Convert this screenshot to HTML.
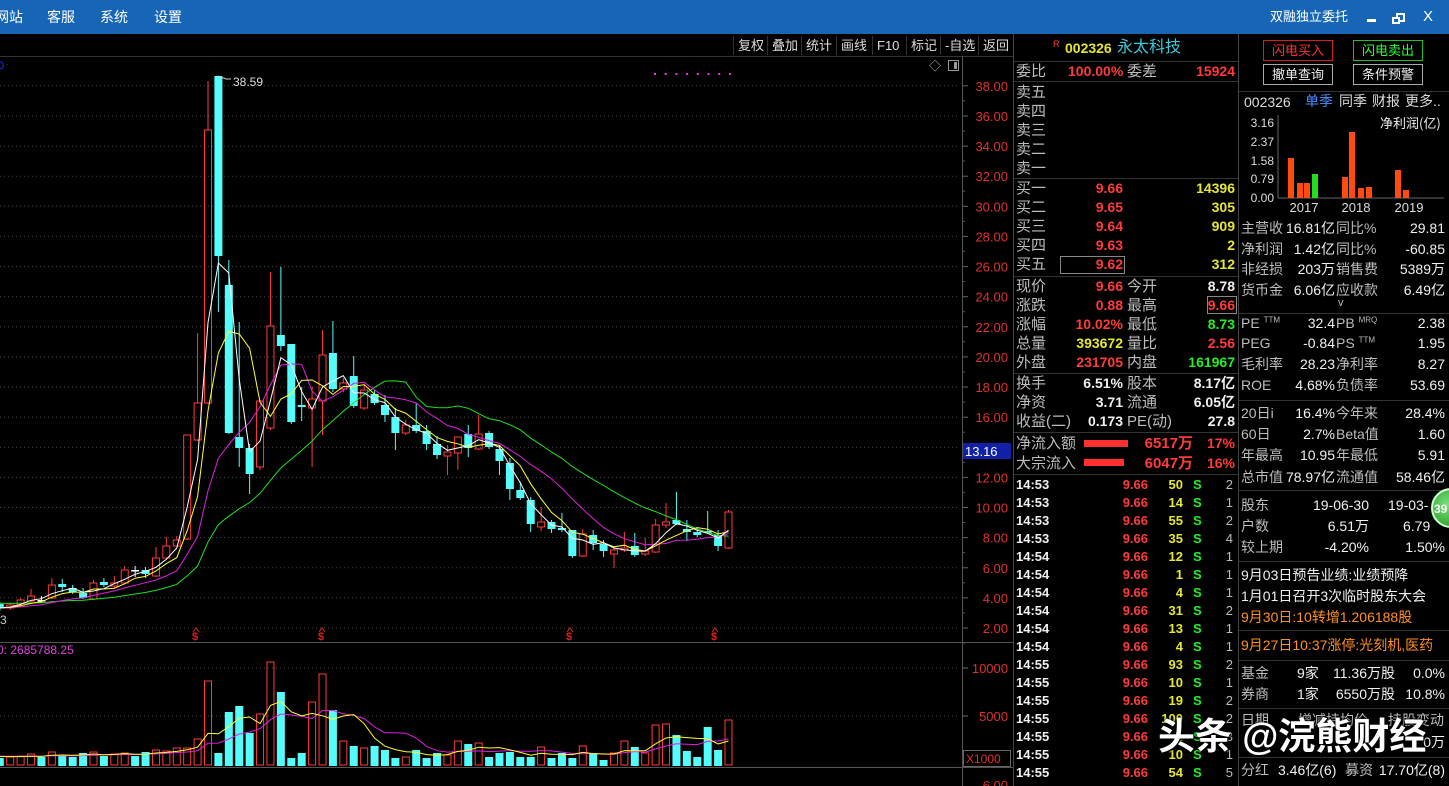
<!DOCTYPE html>
<html><head><meta charset="utf-8">
<style>
*{margin:0;padding:0;box-sizing:border-box}
body{width:1449px;height:786px;background:#000;overflow:hidden;position:relative;font-family:"Liberation Sans","Noto Sans CJK SC",sans-serif;color:#c8c8c8}
.a{position:absolute;white-space:nowrap;line-height:1}
#top{position:absolute;left:0;top:0;width:1449px;height:34px;background:#1766b6}
#top .a{color:#fff;font-size:14px;top:10px}
.tb{position:absolute;top:36px;height:19px;font-size:13px;color:#ddd;line-height:19px;padding:0 4px;border-left:1px solid #333}
.hl{position:absolute;height:1px;background:#333}
.vl{position:absolute;width:1px;background:#3a3a3a}
.lab{color:#bdbdbd}
.r{color:#ff3b3b}.y{color:#e6e633}.g{color:#22ee22}.w{color:#f0f0f0}.o{color:#ff9020}
#mid .r,#mid .y,#mid .g,#mid .w{font-weight:bold}
.btn{position:absolute;width:70px;height:21px;font-size:13px;text-align:center;line-height:19px}
</style></head><body>
<div id="top">
<div class="a" style="left:-5px">网站</div>
<div class="a" style="left:47px">客服</div>
<div class="a" style="left:100px">系统</div>
<div class="a" style="left:154px">设置</div>
<div class="a" style="left:1270px;font-size:13px">双融独立委托</div>
<div style="position:absolute;left:1367px;top:19px;width:9px;height:3px;background:#fff"></div>
<div style="position:absolute;left:1396px;top:13px;width:9px;height:9px;border:2px solid #fff"></div>
<div style="position:absolute;left:1392px;top:17px;width:8px;height:7px;border:2px solid #fff;background:#1766b6"></div>
<div class="a" style="left:1423px;top:9px;font-size:15px">X</div>
</div>
<div class="tb" style="left:733px">复权</div>
<div class="tb" style="left:767px">叠加</div>
<div class="tb" style="left:801px">统计</div>
<div class="tb" style="left:836px">画线</div>
<div class="tb" style="left:872px">F10</div>
<div class="tb" style="left:906px">标记</div>
<div class="tb" style="left:940px">-自选</div>
<div class="tb" style="left:978px;border-right:1px solid #333">返回</div>
<div class="hl" style="left:0;top:56px;width:1013px"></div>

<svg id="ch" width="1013" height="786" style="position:absolute;left:0;top:0"></svg>

<div class="vl" style="left:1013px;top:34px;height:752px;background:#444"></div>
<div class="vl" style="left:1238px;top:34px;height:752px;background:#444"></div>

<div class="a r" style="left:1053px;top:40px;font-size:9px">R</div>
<div class="a y" style="left:1065px;top:41px;font-size:14px;font-weight:bold">002326</div>
<div class="a" style="left:1117px;top:40px;font-size:16px;color:#3cc8d8">永太科技</div>
<div class="hl" style="left:1014px;top:61px;width:224px"></div>
<div id="mid"></div>

<div class="btn" style="left:1263px;top:40px;border:1px solid #d02020;color:#ff3030">闪电买入</div>
<div class="btn" style="left:1353px;top:40px;border:1px solid #20c020;color:#30ff30">闪电卖出</div>
<div class="btn" style="left:1263px;top:64px;border:1px solid #aaa;color:#eee">撤单查询</div>
<div class="btn" style="left:1353px;top:64px;border:1px solid #aaa;color:#eee">条件预警</div>
<div class="hl" style="left:1239px;top:91px;width:210px"></div>
<div class="a" style="left:1244px;top:95px;font-size:14px;color:#ddd">002326</div>
<div class="a" style="left:1305px;top:94px;font-size:14px;color:#4a8cff">单季</div>
<div class="a" style="left:1339px;top:94px;font-size:14px;color:#ddd">同季</div>
<div class="a" style="left:1372px;top:94px;font-size:14px;color:#ddd">财报</div>
<div class="a" style="left:1405px;top:94px;font-size:14px;color:#ddd">更多..</div>
<svg width="210" height="110" style="position:absolute;left:1239px;top:110px">
<g font-size="12" fill="#ddd" text-anchor="end" font-family="Liberation Sans">
<text x="35" y="17">3.16</text><text x="35" y="36">2.37</text><text x="35" y="55">1.58</text><text x="35" y="73">0.79</text><text x="35" y="92">0.00</text>
<text x="65" y="102" text-anchor="middle" font-size="13">2017</text><text x="117" y="102" text-anchor="middle" font-size="13">2018</text><text x="170" y="102" text-anchor="middle" font-size="13">2019</text>
</g>
<text x="141" y="18" font-size="13" fill="#eee" font-family="Noto Sans CJK SC">净利润(亿)</text>
<line x1="39" y1="5" x2="39" y2="88" stroke="#666"/>
<line x1="39" y1="88" x2="205" y2="88" stroke="#666"/>
<g fill="#ff4a10">
<rect x="49" y="48" width="6" height="40"/><rect x="58" y="73" width="6" height="15"/><rect x="65" y="73" width="6" height="15"/>
<rect x="103" y="67" width="6" height="21"/><rect x="110" y="22" width="6" height="66"/><rect x="119" y="78" width="6" height="10"/><rect x="127" y="77" width="6" height="11"/>
<rect x="156" y="60" width="6" height="28"/><rect x="164" y="80" width="6" height="8"/></g>
<rect x="73" y="64" width="6" height="24" fill="#22dd22"/>
</svg>
<div id="rgt"></div>
<div style="position:absolute;left:1431px;top:488px;width:40px;height:40px;border-radius:50%;background:radial-gradient(circle at 40% 40%,#7be07b,#189018);border:2px solid #cfc"></div>
<div class="a" style="left:1434px;top:503px;font-size:12px;color:#fff;font-weight:bold">39</div>
<div class="a" style="left:1158px;top:718px;font-size:37px;color:#fff;font-weight:bold;text-shadow:0 0 3px #000,1px 1px 2px #000">头条 @浣熊财经</div>

<script>
var s='';
function Y(p){return 628-(p-2)*15.06}
for(var k=0;k<=18;k++){var p=38-2*k,y=Y(p).toFixed(1);
s+='<line x1="0" y1="'+y+'" x2="960" y2="'+y+'" stroke="#4a4a4a" stroke-dasharray="1,3"/>';
s+='<line x1="962" y1="'+y+'" x2="968" y2="'+y+'" stroke="#666"/>';
s+='<text x="1008" y="'+(+y+5)+'" fill="#e03030" font-size="13" text-anchor="end">'+p.toFixed(2)+'</text>';
s+='<line x1="962" y1="'+(Y(p)+15).toFixed(1)+'" x2="965" y2="'+(Y(p)+15).toFixed(1)+'" stroke="#555"/>';}
s+='<line x1="962.5" y1="56" x2="962.5" y2="786" stroke="#555"/>';
s+='<line x1="0" y1="642.5" x2="1013" y2="642.5" stroke="#555"/>';
s+='<line x1="0" y1="767.5" x2="1013" y2="767.5" stroke="#555"/>';
[[668,'10000'],[716,'5000']].forEach(function(a){s+='<line x1="0" y1="'+a[0]+'" x2="960" y2="'+a[0]+'" stroke="#4a4a4a" stroke-dasharray="1,3"/><line x1="962" y1="'+a[0]+'" x2="968" y2="'+a[0]+'" stroke="#666"/><text x="1008" y="'+(a[0]+5)+'" fill="#e03030" font-size="13" text-anchor="end">'+a[1]+'</text>'});
s+='<rect x="963.5" y="750.5" width="47" height="16" fill="none" stroke="#666"/><text x="966" y="763" fill="#e03030" font-size="12">X1000</text>';
s+='<text x="1008" y="790" fill="#e03030" font-size="13" text-anchor="end">6.00</text>';
s+='<rect x="963" y="443" width="48" height="16" fill="#1020a8"/><text x="965" y="456" fill="#fff" font-size="13">13.16</text>';
s+='<text x="-2" y="69" fill="#2030ff" font-size="11">0</text><text x="6" y="67" fill="#2030ff" font-size="7">-</text>';
for(var i=0;i<8;i++)s+='<rect x="'+(654+i*10.7)+'" y="73" width="2" height="2" fill="#e040e0"/>';
s+='<text x="929" y="70" fill="#bbb" font-size="12">◇</text><rect x="948.5" y="60.5" width="10" height="10" fill="none" stroke="#999"/><rect x="954" y="62" width="3" height="7" fill="#999"/>';
s+='<text x="0" y="624" fill="#ccc" font-size="12">3</text>';
s+='<text x="-3" y="654" fill="#e040e0" font-size="12">0: 2685788.25</text>';
[196,322,570,715].forEach(function(x){s+='<text x="'+(x-4)+'" y="640" fill="#e02020" font-size="11" font-weight="bold">$</text><path d="M'+(x-3)+' 632 L'+x+' 628 L'+(x+3)+' 632" stroke="#e02020" fill="none"/>'});
var C=[[604,608,602,611,'c'],[605,608,603,610,'r'],[600,605,598,607,'r'],[596,601,589,602,'r'],[600,600,596,603,'w'],[585,598,578,599,'r'],[584,587,579,592,'c'],[588,592,585,594,'c'],[593,598,588,599,'c'],[583,599,580,600,'r'],[582,585,578,587,'c'],[583,586,576,588,'r'],[570,583,566,584,'r'],[570,570,566,577,'w'],[570,574,567,578,'c'],
[558,576,547,577,'r'],[546,558,537,559,'r'],[540,546,536,547,'r'],[435,539,435,540,'r'],[403,440,333,441,'r'],[130,403,81,404,'r'],[76,256,76,312,'c'],[285,433,260,434,'c'],[437,448,322,467,'c'],[448,474,444,494,'c'],[401,467,401,470,'r'],[326,428,272,430,'r'],[335,346,267,351,'c'],[344,422,344,424,'c'],[405,407,387,421,'c'],[399,408,387,467,'r'],[355,401,330,435,'r'],[353,389,321,392,'c'],[383,389,378,392,'r'],[376,406,356,408,'c'],[390,408,385,410,'r'],[394,403,390,405,'c'],
[405,415,395,422,'c'],[417,433,408,450,'c'],[425,433,420,435,'r'],[425,431,403,433,'c'],[431,444,425,450,'c'],[444,455,436,459,'c'],[452,456,445,475,'r'],[437,453,437,470,'r'],[434,448,425,457,'c'],[434,449,415,450,'r'],[433,447,431,449,'c'],[449,461,445,475,'c'],[463,489,458,500,'c'],[490,498,482,500,'c'],[500,524,497,532,'c'],[522,527,507,531,'r'],[522,529,520,533,'c'],[528,530,513,532,'c'],[530,556,530,558,'c'],[534,556,529,557,'r'],[535,543,530,550,'c'],[544,551,540,557,'c'],[550,554,548,568,'r'],[548,550,532,552,'r'],[546,555,533,557,'c'],[551,554,538,556,'r'],[525,552,519,553,'r'],[522,525,503,528,'r'],[520,524,492,525,'c'],[529,532,520,541,'c'],[532,535,527,537,'c'],[531,533,511,534,'c'],[535,546,530,551,'c'],[512,548,510,549,'r']];
var V=[758,757,756,754,757,752,756,757,753,752,756,754,753,756,752,750,751,748,748,739,681,753,712,706,733,714,662,692,758,753,702,674,710,741,746,748,746,750,758,757,750,758,753,755,741,744,743,757,753,752,757,757,747,758,753,758,746,753,760,753,741,747,753,725,724,735,751,757,727,750,720];
function X(i){return -0.2+10.41*i}
var RED='#ff3a3a',CY='#54fcfc';
C.forEach(function(c,i){var x=X(i);
 if(c[4]=='r'){s+='<line x1="'+x+'" y1="'+c[2]+'" x2="'+x+'" y2="'+c[0]+'" stroke="'+RED+'"/><line x1="'+x+'" y1="'+c[1]+'" x2="'+x+'" y2="'+c[3]+'" stroke="'+RED+'"/><rect x="'+(x-3.5)+'" y="'+c[0]+'" width="7" height="'+Math.max(1,c[1]-c[0])+'" fill="none" stroke="'+RED+'"/>';}
 else{var col=c[4]=='w'?'#fff':CY;s+='<line x1="'+x+'" y1="'+c[2]+'" x2="'+x+'" y2="'+c[3]+'" stroke="'+col+'"/><rect x="'+(x-4)+'" y="'+c[0]+'" width="8" height="'+Math.max(1.5,c[1]-c[0])+'" fill="'+col+'"/>';}
});
s+='<path d="M218 76 L226 79 L231 79" stroke="#ccc" fill="none"/><text x="233" y="86" fill="#ddd" font-size="12">38.59</text>';
var cl=C.map(function(c){return c[4]=='r'?c[0]:c[1]});
function ma(arr,n,pad){var pts=[];for(var i=0;i<arr.length;i++){var t=0;for(var j=i-n+1;j<=i;j++)t+=(j<0?pad:arr[j]);pts.push(X(i).toFixed(1)+','+(t/n).toFixed(1))}return pts.join(' ')}
s+='<polyline points="'+ma(cl,20,603)+'" fill="none" stroke="#20e020"/>';
s+='<polyline points="'+ma(cl,10,608)+'" fill="none" stroke="#e020e0"/>';
s+='<polyline points="'+ma(cl,5,608)+'" fill="none" stroke="#ffff30"/>';
s+='<polyline points="'+ma(cl,3,608)+'" fill="none" stroke="#ffffff"/>';
V.forEach(function(v,i){var x=X(i),c=C[i][4];if(c=='r')s+='<rect x="'+(x-3.5)+'" y="'+v+'" width="7" height="'+(765-v)+'" fill="none" stroke="'+RED+'"/>';else s+='<rect x="'+(x-4)+'" y="'+v+'" width="8" height="'+(766-v)+'" fill="'+CY+'"/>';});
s+='<polyline points="'+ma(V,10,756)+'" fill="none" stroke="#e020e0"/>';
s+='<polyline points="'+ma(V,5,756)+'" fill="none" stroke="#ffff30"/>';
document.getElementById('ch').innerHTML=s;

var h='';
function T(x,y,t,cls,al,fs){h+='<div class="a '+(cls||'lab')+'" style="'+(al?'right:'+(1449-x)+'px':'left:'+x+'px')+';top:'+(y-8)+'px;font-size:'+(fs||15)+'px">'+t+'</div>'}
function L(y,x0,w){h+='<div class="hl" style="left:'+x0+'px;top:'+y+'px;width:'+w+'px"></div>'}
T(1016,72,'委比');T(1068,72,'100.00%','r',0,14);T(1127,72,'委差');T(1235,72,'15924','r',1,14);
L(81,1014,224);
['卖五','卖四','卖三','卖二','卖一'].forEach(function(t,i){T(1016,93+i*19,t)});
L(178,1014,224);
var b=[['9.66','14396'],['9.65','305'],['9.64','909'],['9.63','2'],['9.62','312']];
['买一','买二','买三','买四','买五'].forEach(function(t,i){var y=189+i*19;T(1016,y,t);T(1123,y,b[i][0],'r',1,14);T(1235,y,b[i][1],'y',1,14)});
h+='<div style="position:absolute;left:1060px;top:256px;width:65px;height:18px;border:1px solid #888"></div>';
L(276,1014,224);
var q=[['现价','9.66','r','今开','8.78','w'],['涨跌','0.88','r','最高','9.66','r'],['涨幅','10.02%','r','最低','8.73','g'],['总量','393672','y','量比','2.56','r'],['外盘','231705','r','内盘','161967','g']];
q.forEach(function(a,i){var y=287+i*19;T(1016,y,a[0]);T(1123,y,a[1],a[2],1,14);T(1127,y,a[3]);T(1235,y,a[4],a[5],1,14)});
h+='<div style="position:absolute;left:1207px;top:296px;width:30px;height:18px;border:1px solid #888"></div>';
L(373,1014,224);
var q2=[['换手','6.51%','股本','8.17亿'],['净资','3.71','流通','6.05亿'],['收益(二)','0.173','PE(动)','27.8']];
q2.forEach(function(a,i){var y=384+i*19;T(1016,y,a[0]);T(1123,y,a[1],'w',1,14);T(1127,y,a[2]);T(1235,y,a[3],'w',1,14)});
L(432,1014,224);
T(1016,444,'净流入额');T(1016,464,'大宗流入');
h+='<div style="position:absolute;left:1084px;top:440px;width:44px;height:7px;background:#ff3030"></div><div style="position:absolute;left:1084px;top:459px;width:40px;height:7px;background:#ff3030"></div>';
T(1193,444,'6517万','r',1);T(1235,444,'17%','r',1,14);T(1193,464,'6047万','r',1);T(1235,464,'16%','r',1,14);
L(474,1014,224);
var tk=[['14:53',50,2],['14:53',14,1],['14:53',55,2],['14:53',35,4],['14:54',12,1],['14:54',1,1],['14:54',4,1],['14:54',31,2],['14:54',13,1],['14:54',4,1],['14:55',93,2],['14:55',10,1],['14:55',19,2],['14:55',100,2],['14:55',1,3],['14:55',10,1],['14:55',54,5]];
tk.forEach(function(a,i){var y=486+i*18;T(1016,y,a[0],'w',0,13);T(1148,y,'9.66','r',1,13);T(1183,y,a[1],'y',1,13);T(1193,y,'S','g',0,13);T(1233,y,a[2],'lab',1,13)});
document.getElementById('mid').innerHTML=h;

h='';
function R(y,a,b,c,d,fs){T(1241,y,a,'lab',0,fs||14);T(1335,y,b,'w',1,14);T(1336,y,c,'lab',0,14);T(1445,y,d,'w',1,14)}
R(229,'主营收','16.81亿','同比%','29.81');R(250,'净利润','1.42亿','同比%','-60.85');R(270,'非经损','203万','销售费','5389万');R(291,'货币金','6.06亿','应收款','6.49亿');
T(1338,306,'v','lab',0,11);L(313,1239,210);
R(324,'PE <sup style="font-size:8px">TTM</sup>','32.4','PB <sup style="font-size:8px">MRQ</sup>','2.38');R(344,'PEG','-0.84','PS <sup style="font-size:8px">TTM</sup>','1.95');R(365,'毛利率','28.23','净利率','8.27');R(386,'ROE','4.68%','负债率','53.69');
L(400,1239,210);
R(414,'20日i','16.4%','今年来','28.4%');R(435,'60日','2.7%','Beta值','1.60');R(456,'年最高','10.95','年最低','5.91');R(478,'总市值','78.97亿','流通值','58.46亿');
L(490,1239,210);
T(1241,506,'股东','lab',0,14);T(1369,506,'19-06-30','w',1,14);T(1388,506,'19-03-','w',0,14);
T(1241,527,'户数','lab',0,14);T(1369,527,'6.51万','w',1,14);T(1403,527,'6.79','w',0,14);
T(1241,548,'较上期','lab',0,14);T(1369,548,'-4.20%','w',1,14);T(1445,548,'1.50%','w',1,14);
L(561,1239,210);
T(1241,576,'9月03日预告业绩:业绩预降','w',0,14);T(1241,597,'1月01日召开3次临时股东大会','w',0,14);T(1241,618,'9月30日:10转增1.206188股','o',0,14);
L(630,1239,210);T(1241,646,'9月27日10:37涨停:光刻机,医药','o',0,14);L(660,1239,210);
T(1241,674,'基金','lab',0,14);T(1297,674,'9家','w',0,14);T(1395,674,'11.36万股','w',1,14);T(1445,674,'0.0%','w',1,14);
T(1241,695,'券商','lab',0,14);T(1297,695,'1家','w',0,14);T(1395,695,'6550万股','w',1,14);T(1445,695,'10.8%','w',1,14);
L(708,1239,210);
T(1241,721,'日期','lab',0,14);T(1298,721,'增减持均价','lab',0,14);T(1388,721,'持股变动','lab',0,14);T(1445,743,'0万','w',1,14);
L(757,1239,210);
T(1241,771,'分红','lab',0,14);T(1278,771,'3.46亿(6)','w',0,14);T(1345,771,'募资','lab',0,14);T(1445,771,'17.70亿(8)','w',1,14);
document.getElementById('rgt').innerHTML=h;
</script>
</body></html>
